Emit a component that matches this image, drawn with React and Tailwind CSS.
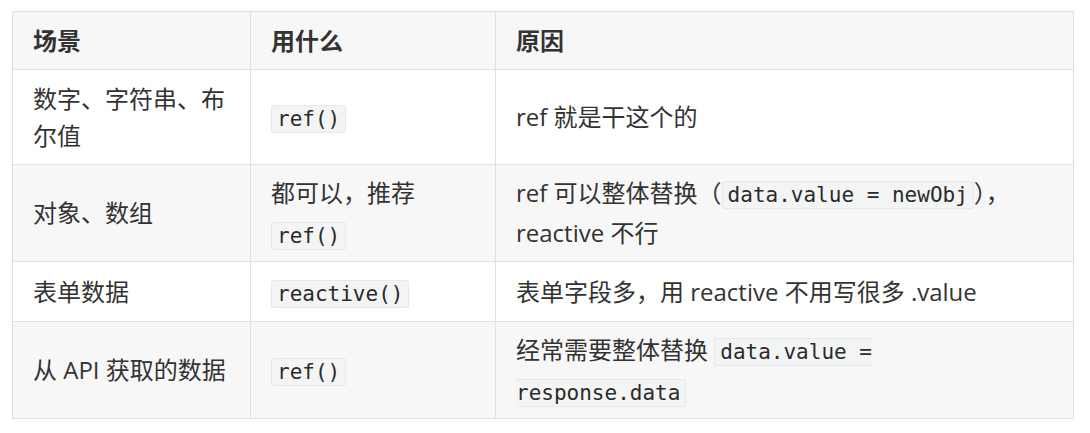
import React from "react";

const sans = { fontFamily: "'Open Sans', 'Noto Sans CJK SC', sans-serif" };

function Code({ children }) {
  return (
    <code
      className="text-[21px] leading-[24px] px-[5px] py-[1px] rounded-[3px] bg-[#f3f4f4] border border-[#e6e8ea] text-[#2b2b2b]"
      style={{ fontFamily: "'DejaVu Sans Mono', monospace" }}
    >
      {children}
    </code>
  );
}

function Cell({ children, h, bg, bold, lh = "leading-[38px]" }) {
  return (
    <div
      className={`flex items-center pl-[20px] pr-[20px] border-r border-b border-[#dfe2e5] ${h} ${bg} ${bold ? "font-bold" : ""}`}
    >
      <div className={`${lh} text-[24px] text-[#333]`}>{children}</div>
    </div>
  );
}

export default function App() {
  const g = "bg-[#f7f7f7]";
  const w = "bg-white";
  return (
    <div className="w-[1090px] h-[433px] bg-white pt-[11px] pl-[12px]" style={sans}>
      <div className="grid grid-cols-[238px_245px_578px] w-[1062px] border-l border-t border-[#dfe2e5]">
        <Cell h="h-[58px]" bg={g} bold>场景</Cell>
        <Cell h="h-[58px]" bg={g} bold>用什么</Cell>
        <Cell h="h-[58px]" bg={g} bold>原因</Cell>

        <Cell h="h-[95px]" bg={w} lh="leading-[37px]">
          数字、字符串、布<br />尔值
        </Cell>
        <Cell h="h-[95px]" bg={w}>
          <Code>ref()</Code>
        </Cell>
        <Cell h="h-[95px]" bg={w}>ref 就是干这个的</Cell>

        <Cell h="h-[97px]" bg={g}>对象、数组</Cell>
        <Cell h="h-[97px]" bg={g} lh="leading-[41px]">
          都可以，推荐<br />
          <Code>ref()</Code>
        </Cell>
        <Cell h="h-[97px]" bg={g} lh="leading-[40px]">
          ref 可以整体替换（<Code>data.value = newObj</Code>），<br />reactive 不行
        </Cell>

        <Cell h="h-[60px]" bg={w}>表单数据</Cell>
        <Cell h="h-[60px]" bg={w}>
          <Code>reactive()</Code>
        </Cell>
        <Cell h="h-[60px]" bg={w}>表单字段多，用 reactive 不用写很多 .value</Cell>

        <Cell h="h-[97px]" bg={g}>从 API 获取的数据</Cell>
        <Cell h="h-[97px]" bg={g}>
          <Code>ref()</Code>
        </Cell>
        <Cell h="h-[97px]" bg={g} lh="leading-[41px]">
          经常需要整体替换 <Code>data.value =<br />response.data</Code>
        </Cell>
      </div>
    </div>
  );
}
